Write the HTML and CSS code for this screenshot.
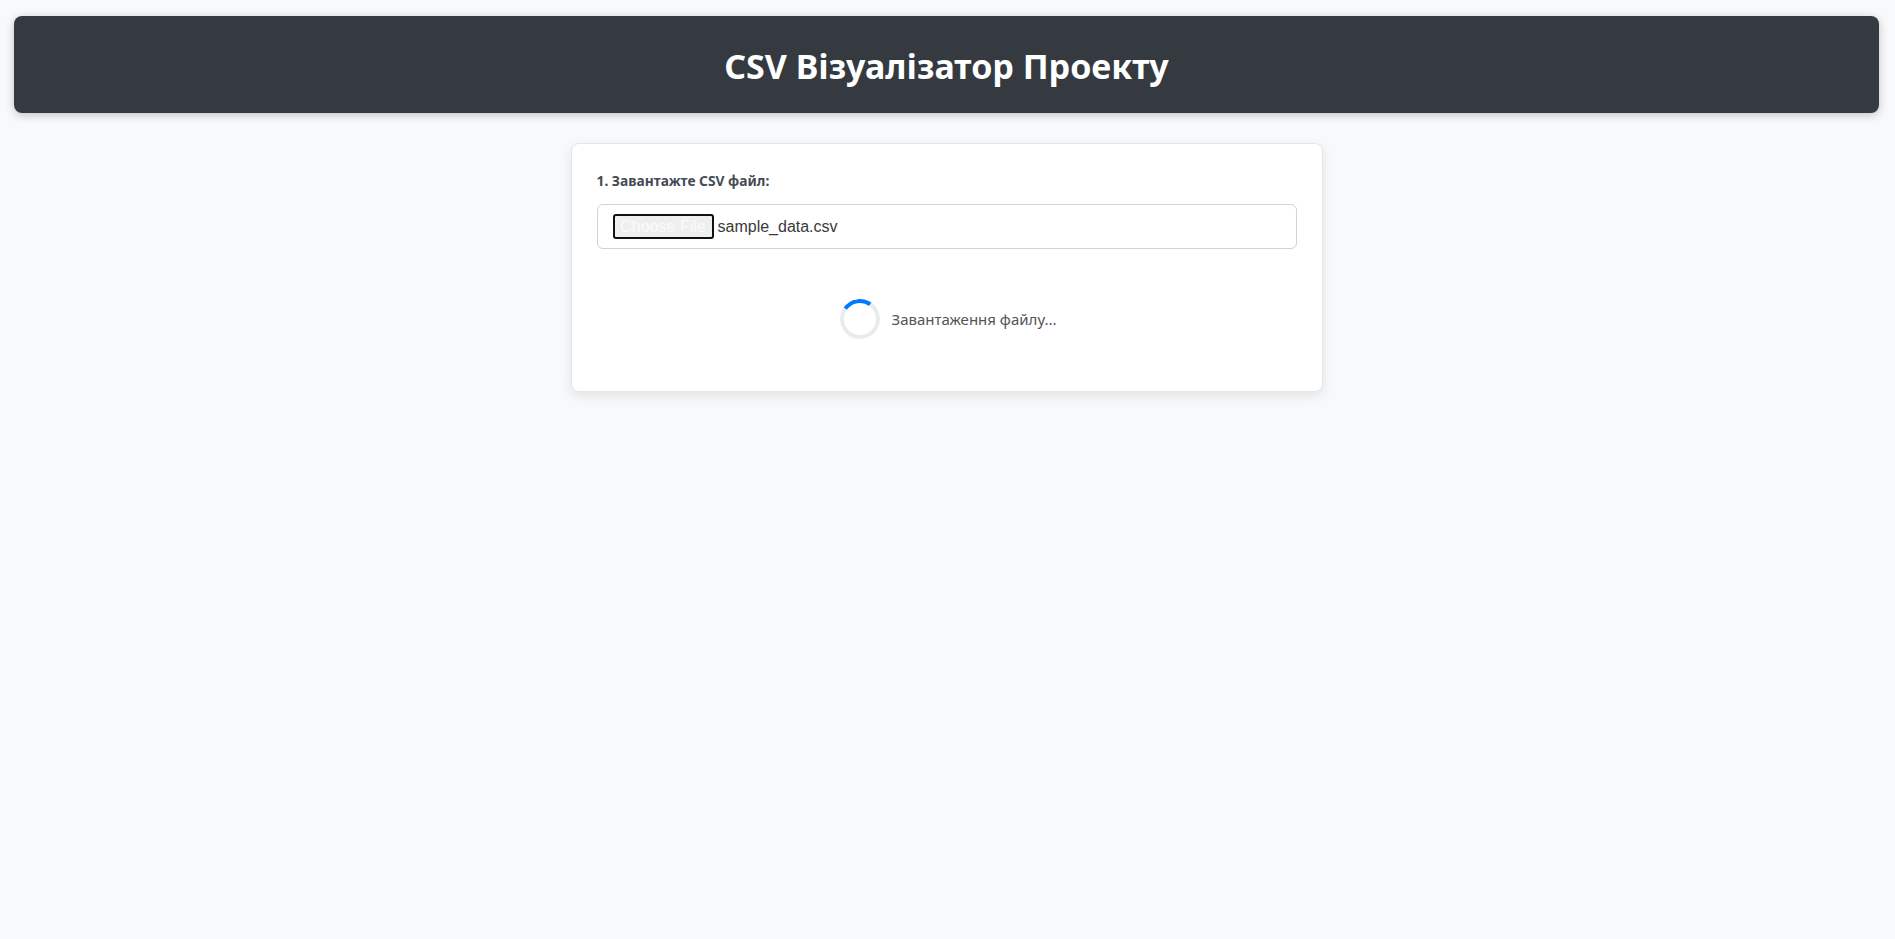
FILE: index.html
```html
<!DOCTYPE html>
<html lang="uk">
<head>
<meta charset="utf-8">
<title>CSV Візуалізатор Проекту</title>
<link rel="stylesheet" href="styles.css">
</head>
<body>
<div class="page">
  <header class="header">
    <h1 class="title">CSV Візуалізатор Проекту</h1>
  </header>
  <main class="card">
    <label class="label">1. Завантажте CSV файл:</label>
    <div class="file-input">
      <span class="file-btn">Choose File</span>
      <span class="file-name">sample_data.csv</span>
    </div>
    <div class="loading">
      <span class="spinner"></span>
      <span class="loading-text">Завантаження файлу...</span>
    </div>
  </main>
</div>
</body>
</html>
```
FILE: styles.css
```css
* { box-sizing: border-box; }
html, body { margin: 0; padding: 0; }
body {
  background: #f8f9fa;
  font-family: "Noto Sans", "Open Sans", sans-serif;
  color: #333;
  height: 939px;
}
.page {
  padding: 16px 16px 0 14px;
}
.header {
  background: #343a40;
  border-radius: 8px;
  height: 97px;
  display: flex;
  align-items: center;
  justify-content: center;
  box-shadow: 0 2px 10px rgba(0,0,0,0.22);
}
.title {
  margin: 0;
  color: #fff;
  font-size: 34px;
  font-weight: 700;
  letter-spacing: 0;
  padding-top: 2px;
}
.card {
  width: 752px;
  margin: 30px auto 0;
  background: #fff;
  border: 1px solid #e3e6ea;
  border-radius: 8px;
  box-shadow: 0 4px 12px rgba(0,0,0,0.09);
  padding: 25px 25px 26px;
  display: flex;
  flex-direction: column;
}
.label {
  font-size: 13.8px;
  font-weight: 700;
  color: #444b55;
  line-height: 21px;
  margin-top: 1px;
  margin-bottom: 13px;
}
.file-input {
  height: 45px;
  border: 1px solid #ced4da;
  border-radius: 6px;
  display: flex;
  align-items: center;
  padding: 0 0 0 15px;
  font-family: "Liberation Sans", Arial, sans-serif;
  font-size: 16px;
}
.file-btn {
  display: inline-flex;
  align-items: center;
  justify-content: center;
  width: 101px;
  height: 25px;
  background: #efefef;
  color: #fbfbfb;
  border: 2px solid #111;
  border-radius: 3px;
  font-size: 16px;
  margin-right: 4px;
}
.file-name { color: #3a3a3a; }
.loading {
  display: flex;
  align-items: center;
  justify-content: center;
  margin-top: 25px;
  padding: 25px 0 26px;
}
.spinner {
  width: 40px;
  height: 40px;
  border-radius: 50%;
  border: 4px solid #e9ecef;
  border-top-color: #007bff;
  transform: rotate(-10deg);
  margin-left: 3px;
  margin-right: 12px;
  flex: none;
}
.loading-text {
  font-size: 15px;
  color: #555;
}
```
